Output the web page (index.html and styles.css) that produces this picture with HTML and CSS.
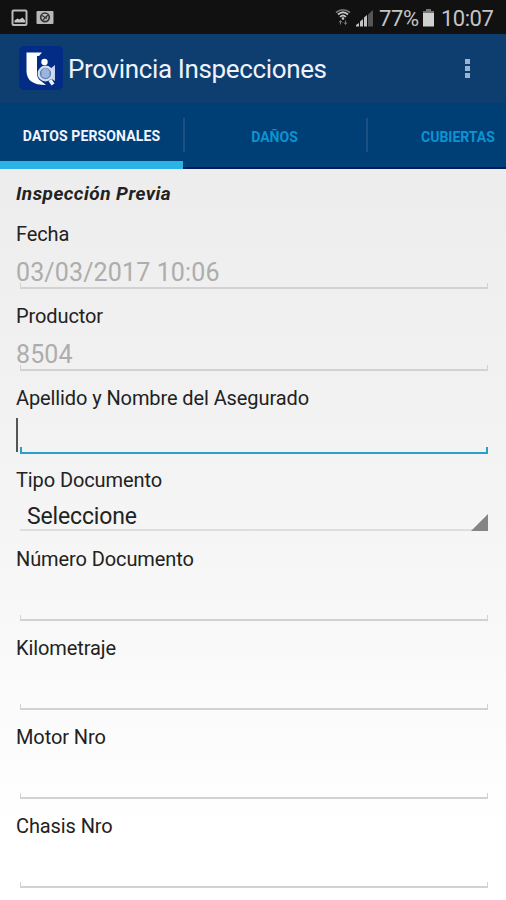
FILE: index.html
```html
<!DOCTYPE html>
<html lang="es">
<head>
<meta charset="utf-8">
<title>Provincia Inspecciones</title>
<link rel="stylesheet" href="styles.css">
</head>
<body>
<div class="statusbar">
  <svg class="notif" width="50" height="34" viewBox="0 0 50 34">
    <rect x="4.500" y="10.500" width="14" height="14.500" rx="1" fill="none" stroke="#b9b9b9" stroke-width="2"/>
    <path d="M6.500 22.500v-2l3-2 2 1 3-2 2.500 3v2z" fill="#c8c8c8"/>
    <rect x="28.500" y="11" width="17" height="13" rx="1" fill="#b8b8b8"/>
    <circle cx="37" cy="17.300" r="4.300" fill="none" stroke="#333" stroke-width="1.700"/>
    <path d="M34 15.500l5 3M40 15l-5 5" stroke="#333" stroke-width="1.300"/>
  </svg>
  <div class="status-right">
    <svg width="40" height="34" viewBox="0 0 40 34">
      <g fill="none" stroke="#c4c4c4" stroke-width="1.700">
        <path d="M1 12.500q7-5.500 14 0" stroke="#777"/>
        <path d="M3 14.500q5-4.500 10 0M5 17q3-3 6 0"/>
      </g>
      <circle cx="8" cy="18.500" r="1.300" fill="#ccc"/>
      <path d="M5.500 20.500v4M4 22.500l1.500-2 1.500 2M10.500 20.500v4M9 22.500l1.500 2 1.500-2" stroke="#777" fill="none"/>
      <g fill="#c4c4c4">
        <path d="M21 26.500v-1.500l3-2v3.500zM25 26.500v-5l3-2.500v7.500zM29 26.500v-9l3-2.500v11.500z"/>
        <path d="M33 26.500v-12l5-4.500v16.500z" fill="#555"/>
      </g>
    </svg>
    <span class="percent">77%</span>
    <svg class="battery" width="13" height="34" viewBox="0 0 13 34"><path d="M4 9h5v2h3v15.500H1V11h3z" fill="#d0d0d0"/><path d="M4 9h5v2h3v2H1v-2h3z" fill="#777"/></svg>
    <span class="clock">10:07</span>
  </div>
</div>
<header class="actionbar">
  <svg class="logo" width="44" height="44" viewBox="0 0 44 44">
    <rect width="44" height="44" rx="5" fill="#022c85"/>
    <path d="M7.500 6.500h15.500l-3 3.500h-2v17q0 6 4 8l5 4q-19.500 0-19.500-14z" fill="#fff"/>
    <circle cx="25.500" cy="16" r="3.200" fill="#fff"/>
    <path d="M31 23l5-4v16l-5-3z" fill="#c5d3ee"/>
    <circle cx="26.500" cy="27.500" r="6.800" fill="#5f80bd" stroke="#d3def2" stroke-width="2.200"/>
    <path d="M22.500 25q4-6 8 0v5q-4 4-8 0z" fill="#9db4de"/>
    <path d="M31 34l3 4.500" stroke="#f0f4ff" stroke-width="3.500"/>
  </svg>
  <h1 class="title">Provincia Inspecciones</h1>
  <div class="overflow"><i></i><i></i><i></i></div>
</header>
<nav class="tabs">
  <div class="tab active"><span>DATOS PERSONALES</span></div>
  <div class="tab"><span>DAÑOS</span></div>
  <div class="tab last"><span>CUBIERTAS</span></div>
</nav>
<main class="form">
  <h2 class="section">Inspección Previa</h2>
  <div class="field"><div class="label">Fecha</div><div class="input"><span class="value">03/03/2017 10:06</span></div></div>
  <div class="field"><div class="label">Productor</div><div class="input"><span class="value">8504</span></div></div>
  <div class="field"><div class="label">Apellido y Nombre del Asegurado</div><div class="input focused"><span class="caret"></span></div></div>
  <div class="field select"><div class="label">Tipo Documento</div><div class="spinner"><span>Seleccione</span><svg width="17" height="17" viewBox="0 0 17 17"><path d="M17 0v17H0z" fill="#858585"/></svg></div></div>
  <div class="field tall"><div class="label">Número Documento</div><div class="input"></div></div>
  <div class="field tall"><div class="label">Kilometraje</div><div class="input"></div></div>
  <div class="field tall"><div class="label">Motor Nro</div><div class="input"></div></div>
  <div class="field tall"><div class="label">Chasis Nro</div><div class="input"></div></div>
</main>
</body>
</html>
```
FILE: styles.css
```css
* { box-sizing: border-box; }
body {
  margin: 0;
  width: 506px;
  height: 900px;
  overflow: hidden;
  display: flex;
  flex-direction: column;
  font-family: Roboto, "Liberation Sans", sans-serif;
  background: #fff;
}
.statusbar {
  height: 34px;
  flex: none;
  background: #111;
  display: flex;
  justify-content: space-between;
  padding: 0 12px 0 8px;
  color: #c4c4c4;
  font-size: 22px;
  line-height: 37px;
}
.status-right { display: flex; }
.percent { width: 40px; margin-left: 4px; letter-spacing: -0.4px; }
.battery { margin-left: 3px; }
.clock { width: 53px; margin-left: 6px; letter-spacing: -0.5px; }
.actionbar {
  height: 69px;
  flex: none;
  display: flex;
  align-items: center;
  padding: 0 36px 0 19px;
  background: #0e3e70;
}
.logo { margin-top: -2px; }
.title {
  flex: 1;
  margin: 0 0 0 5px;
  font-size: 26px;
  font-weight: 400;
  line-height: 30px;
  letter-spacing: -0.36px;
  color: #eef2fc;
  white-space: nowrap;
}
.overflow { display: flex; flex-direction: column; gap: 2px; margin-top: -1px; }
.overflow i { width: 5px; height: 5px; background: #9bb4ce; }
.tabs {
  height: 66px;
  flex: none;
  display: grid;
  grid-template-columns: 183px 183px 140px;
  background: #003f75;
  border-bottom: 2px solid #001b61;
}
.tab {
  display: flex;
  align-items: center;
  justify-content: center;
  font-size: 14px;
  font-weight: 700;
  color: #0b93d3;
  background: linear-gradient(#1d4f82, #1d4f82) left 15px / 2px 34px no-repeat;
}
.tab.active {
  height: 66px;
  color: #f2f5ff;
  background: none;
  border-bottom: 8px solid #2db2e5;
  padding-top: 6px;
  letter-spacing: 0.12px;
}
.tab.last { justify-content: flex-start; padding-left: 55px; }
.tab span { margin-top: 1px; }
.form {
  flex: 1;
  padding: 12px 16px 0;
  background: linear-gradient(#ededed, #f3f3f3 40%, #fff 90%);
  color: #222;
}
.section {
  margin: 0;
  height: 41px;
  font-size: 19px;
  line-height: 25px;
  letter-spacing: 0.46px;
  font-weight: 700;
  font-style: italic;
}
.field { height: 82px; }
.label { font-size: 20px; line-height: 24px; height: 24px; letter-spacing: -0.1px; white-space: nowrap; }
.input {
  height: 43px;
  margin: 0 2px 0 4px;
  background:
    linear-gradient(#d2d2d2, #d2d2d2) left bottom / 1px 6px no-repeat,
    linear-gradient(#d2d2d2, #d2d2d2) right bottom / 1px 6px no-repeat,
    linear-gradient(#d2d2d2, #d2d2d2) left bottom / 100% 2px no-repeat;
}
.value { display: block; margin-left: -4px; font-size: 25px; line-height: 54px; letter-spacing: 0.13px; color: #adadad; }
.input.focused {
  height: 44px;
  background:
    linear-gradient(#2a9fc8, #2a9fc8) left bottom / 2px 7px no-repeat,
    linear-gradient(#2a9fc8, #2a9fc8) right bottom / 2px 7px no-repeat,
    linear-gradient(#2a9fc8, #2a9fc8) left bottom / 100% 2px no-repeat;
}
.caret { display: block; width: 2px; height: 42px; margin-left: -4px; background: linear-gradient(#555, #555) left bottom / 2px 34px no-repeat; }
.select { height: 79px; }
.spinner {
  height: 39px;
  margin: 0 2px 0 4px;
  display: flex;
  justify-content: space-between;
  align-items: flex-end;
  background: linear-gradient(#dedede, #dedede) left bottom / 100% 2px no-repeat;
  padding-left: 7px;
  font-size: 23px;
  line-height: 28px;
  letter-spacing: -0.15px;
}
.tall { height: 89px; }
.tall .input { height: 50px; }
```
